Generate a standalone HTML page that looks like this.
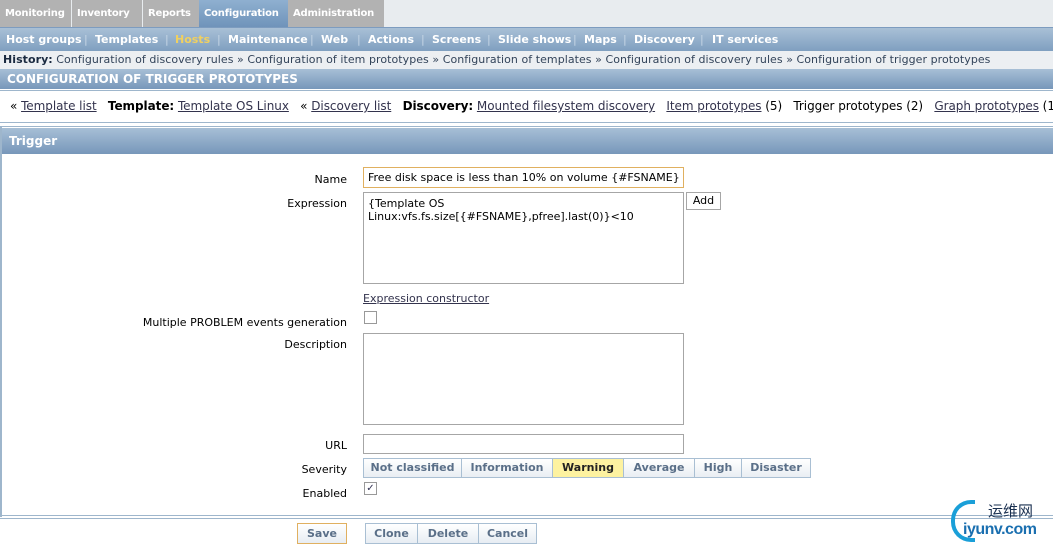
<!DOCTYPE html>
<html><head><style>
*{margin:0;padding:0;box-sizing:border-box}
body{width:1053px;height:546px;overflow:hidden;background:#fff;font-family:"DejaVu Sans","Liberation Sans",sans-serif;font-size:11px;color:#000;position:relative}
.a{position:absolute}
.top{left:0;top:0;width:1053px;height:27px;background:#e8ecef}
.tab{position:absolute;top:0;height:27px;background:#b2b2b2;color:#fff;font-weight:bold;font-size:10px;line-height:27px;padding-left:5px;white-space:nowrap;overflow:hidden;letter-spacing:-0.2px}
.row2{top:27px;left:0;width:1053px;height:24px;background:linear-gradient(#a9c0d6,#7f9fc0);border-top:1px solid #7d9cbf;color:#fff;font-weight:bold;font-size:11px;line-height:23px}
.row2 span{position:absolute}
.sep{color:#c6d6e6;font-weight:normal}
.hist{top:51px;left:0;width:1053px;height:18px;background:#eceff2;font-size:11px;line-height:18px;color:#33445a;padding-left:3px;letter-spacing:0.05px;white-space:nowrap}
.bar{background:linear-gradient(#a7bfd6,#7797ba);color:#fff;font-weight:bold;font-size:12px;padding-left:7px}
u{color:#33334d}
.lbl{position:absolute;right:706px;font-size:11px;text-align:right;white-space:nowrap}
.inp{position:absolute;border:1px solid #a6a6a6;background:#fff}
.sev{position:absolute;top:458px;height:20px;border:1px solid #a9bfd3;background:linear-gradient(#fff,#e9eef3);color:#5a6f88;font-weight:bold;font-size:11px;line-height:18px;text-align:center}
.btn{position:absolute;top:523px;height:21px;border:1px solid #a9bfd3;background:linear-gradient(#fff,#e7edf3);color:#5a6f88;font-weight:bold;font-size:11px;line-height:19px;text-align:center}
</style></head><body>
<div class="a top"></div>
<div class="tab" style="left:0;width:71px">Monitoring</div>
<div class="tab" style="left:72px;width:70px">Inventory</div>
<div class="tab" style="left:143px;width:56px">Reports</div>
<div class="tab" style="left:199px;width:89px;background:linear-gradient(#8fb0d0,#6f93ba)">Configuration</div>
<div class="tab" style="left:288px;width:96px">Administration</div>
<div class="a row2">
<span style="left:6px">Host groups</span><span class="sep" style="left:84px">|</span>
<span style="left:95px">Templates</span><span class="sep" style="left:165px">|</span>
<span style="left:175px;color:#f0d060">Hosts</span><span class="sep" style="left:217px">|</span>
<span style="left:228px">Maintenance</span><span class="sep" style="left:310px">|</span>
<span style="left:321px">Web</span><span class="sep" style="left:357px">|</span>
<span style="left:368px">Actions</span><span class="sep" style="left:421px">|</span>
<span style="left:432px">Screens</span><span class="sep" style="left:487px">|</span>
<span style="left:498px">Slide shows</span><span class="sep" style="left:573px">|</span>
<span style="left:584px">Maps</span><span class="sep" style="left:623px">|</span>
<span style="left:634px">Discovery</span><span class="sep" style="left:700px">|</span>
<span style="left:712px">IT services</span>
</div>
<div class="a hist"><b style="color:#1a2a40">History:</b> Configuration of discovery rules » Configuration of item prototypes » Configuration of templates » Configuration of discovery rules » Configuration of trigger prototypes</div>
<div class="a bar" style="top:69px;left:0;width:1053px;height:20px;line-height:20px">CONFIGURATION OF TRIGGER PROTOTYPES</div>
<div class="a" style="top:90px;left:0;width:1053px;height:33px;border-top:1px solid #9eb6cc;border-bottom:1px solid #9eb6cc;line-height:31px;font-size:12px;white-space:nowrap;padding-left:10px;letter-spacing:-0.05px">« <u>Template list</u> &nbsp; <b>Template:</b> <u>Template OS Linux</u> &nbsp; « <u>Discovery list</u> &nbsp; <b>Discovery:</b> <u>Mounted filesystem discovery</u> &nbsp; <u>Item prototypes</u> (5) &nbsp; Trigger prototypes (2) &nbsp; <u>Graph prototypes</u> (1)</div>
<div class="a" style="top:126px;left:0;width:1053px;height:1px;background:#9eb6cc"></div>
<div class="a" style="top:127px;left:0;width:1053px;height:390px;border-left:2px solid #9eb6cc"></div>
<div class="a bar" style="top:128px;left:2px;width:1051px;height:26px;line-height:26px">Trigger</div>
<div class="lbl" style="top:173px">Name</div>
<div class="inp" style="left:363px;top:167px;width:321px;height:21px;border-color:#e0b060;font-size:11px;line-height:19px;padding-left:4px;white-space:nowrap;overflow:hidden">Free disk space is less than 10% on volume {#FSNAME}</div>
<div class="lbl" style="top:197px">Expression</div>
<div class="inp" style="left:363px;top:192px;width:321px;height:92px;font-size:11px;line-height:13px;padding:4px">{Template OS<br>Linux:vfs.fs.size[{#FSNAME},pfree].last(0)}&lt;10</div>
<div class="inp" style="left:686px;top:192px;width:35px;height:18px;font-size:11px;line-height:16px;text-align:center">Add</div>
<div class="a" style="left:363px;top:292px;font-size:11px"><u>Expression constructor</u></div>
<div class="lbl" style="top:316px">Multiple PROBLEM events generation</div>
<div class="inp" style="left:364px;top:311px;width:13px;height:13px;border-color:#999"></div>
<div class="lbl" style="top:338px">Description</div>
<div class="inp" style="left:363px;top:333px;width:321px;height:92px"></div>
<div class="lbl" style="top:439px">URL</div>
<div class="inp" style="left:363px;top:434px;width:321px;height:20px"></div>
<div class="lbl" style="top:463px">Severity</div>
<div class="sev" style="left:363px;width:99px">Not classified</div>
<div class="sev" style="left:461px;width:92px">Information</div>
<div class="sev" style="left:552px;width:72px;background:#fdf2a0;color:#222">Warning</div>
<div class="sev" style="left:623px;width:72px">Average</div>
<div class="sev" style="left:694px;width:48px">High</div>
<div class="sev" style="left:741px;width:70px">Disaster</div>
<div class="lbl" style="top:487px">Enabled</div>
<div class="inp" style="left:364px;top:482px;width:13px;height:13px;border-color:#999;font-size:10px;line-height:11px;text-align:center;color:#335">✓</div>
<div class="a" style="top:515px;left:0;width:1053px;height:4px;border-top:1px solid #9eb6cc;border-bottom:1px solid #9eb6cc"></div>
<div class="btn" style="left:297px;width:50px;border-color:#e0b060">Save</div>
<div class="btn" style="left:365px;width:53px">Clone</div>
<div class="btn" style="left:417px;width:62px">Delete</div>
<div class="btn" style="left:478px;width:59px">Cancel</div>
<div class="a" style="left:951px;top:500px;width:24px;height:42px;border:4px solid #1a9fd8;border-right:none;border-radius:20px 0 0 20px"></div>
<div class="a" style="left:988px;top:503px;font-family:'Noto Sans CJK SC',sans-serif;font-size:15px;line-height:16px;color:#1a3050">运维网</div>
<div class="a" style="left:963px;top:521px;font-family:'Liberation Sans',sans-serif;font-weight:bold;font-size:16px;letter-spacing:-0.5px;color:#1a6fb0">iyunv.com</div>
</body></html>
